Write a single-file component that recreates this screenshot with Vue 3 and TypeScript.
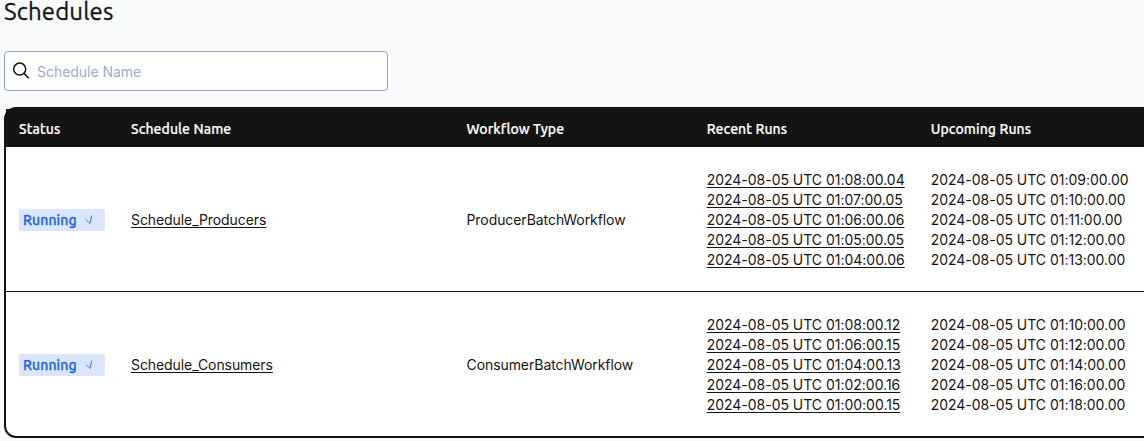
<script setup lang="ts">
interface Schedule {
  name: string
  type: string
  recent: string[]
  upcoming: string[]
}

const day = '2024-08-05 UTC'

const schedules: Schedule[] = [
  {
    name: 'Schedule_Producers',
    type: 'ProducerBatchWorkflow',
    recent: ['01:08:00.04', '01:07:00.05', '01:06:00.06', '01:05:00.05', '01:04:00.06'],
    upcoming: ['01:09:00.00', '01:10:00.00', '01:11:00.00', '01:12:00.00', '01:13:00.00'],
  },
  {
    name: 'Schedule_Consumers',
    type: 'ConsumerBatchWorkflow',
    recent: ['01:08:00.12', '01:06:00.15', '01:04:00.13', '01:02:00.16', '01:00:00.15'],
    upcoming: ['01:10:00.00', '01:12:00.00', '01:14:00.00', '01:16:00.00', '01:18:00.00'],
  },
]
</script>

<template>
  <main class="page">
    <h1 class="title">Schedules</h1>
    <label class="search">
      <svg class="search-icon" width="18" height="18" viewBox="0 0 18 18" fill="none" stroke="#141414" stroke-width="1.5">
        <circle cx="6.7" cy="7.1" r="6" />
        <path d="M11 11.4 15.8 16.2" />
      </svg>
      <input type="text" placeholder="Schedule Name" />
    </label>
    <section class="table">
      <header class="row head">
        <span>Status</span>
        <span>Schedule Name</span>
        <span>Workflow Type</span>
        <span>Recent Runs</span>
        <span>Upcoming Runs</span>
      </header>
      <div v-for="s in schedules" :key="s.name" class="row body">
        <div>
          <span class="badge">
            <span class="badge-text">Running</span>
            <svg width="8" height="10" viewBox="0 0 8 10" fill="none" stroke="#5f83e2" stroke-linecap="round">
              <path d="M1 4.8 4.6 8" stroke-width="1" />
              <path d="M4.9 8.2 6.7 1.2" stroke-width="1.3" />
            </svg>
          </span>
        </div>
        <div class="name"><a class="link">{{ s.name }}</a></div>
        <div class="name">{{ s.type }}</div>
        <div class="runs">
          <a v-for="r in s.recent" :key="r" class="link">{{ day }} {{ r }}</a>
        </div>
        <div class="runs">
          <span v-for="u in s.upcoming" :key="u">{{ day }} {{ u }}</span>
        </div>
      </div>
    </section>
  </main>
</template>

<style>
html,
body {
  margin: 0;
  background: #f8fafc;
  overflow: hidden;
}
</style>

<style scoped>
.page {
  box-sizing: border-box;
  height: 441px;
  padding-left: 4px;
  overflow: hidden;
  color: #141414;
  font: 14px/20px Inter, sans-serif;
}
.title {
  margin: 0;
  height: 51px;
  font: 400 24px/24px Ubuntu, 'Noto Sans', sans-serif;
  letter-spacing: 0.12px;
  -webkit-text-stroke: 0.3px currentColor;
}
.search {
  box-sizing: border-box;
  display: flex;
  align-items: center;
  width: 384px;
  height: 40px;
  padding: 0 8px;
  border: 1px solid #92a4c3;
  border-radius: 4px;
  background: #fff;
}
.search-icon {
  flex: none;
  margin-right: 6px;
}
input {
  flex: 1;
  min-width: 0;
  padding: 2px 0 0;
  border: 0;
  outline: 0;
  background: transparent;
  font: 14px/20px Inter, sans-serif;
  letter-spacing: -0.04px;
}
input::placeholder {
  color: #9aacd3;
  opacity: 1;
}
.table {
  box-sizing: border-box;
  width: 1160px;
  height: 331px;
  margin-top: 16px;
  border: 2px solid #141414;
  border-radius: 12px;
  background: #fff;
}
.row {
  display: grid;
  grid-template-columns: 112px 335.5px 240.2px 224px 1fr;
  padding-left: 13px;
  white-space: nowrap;
}
.head {
  box-sizing: border-box;
  height: 38px;
  padding-top: 2px;
  align-items: center;
  background: #141414;
  color: #fff;
  font: 500 14px/20px Ubuntu, 'Noto Sans', sans-serif;
  letter-spacing: 0.09px;
  -webkit-text-stroke: 0.2px currentColor;
}
.body {
  box-sizing: border-box;
  height: 144px;
  padding-top: 2px;
  align-items: center;
}
.body + .body {
  height: 145px;
  border-top: 1px solid #141414;
}
.name {
  letter-spacing: -0.08px;
}
.runs {
  display: flex;
  flex-direction: column;
  align-items: flex-start;
  letter-spacing: -0.02px;
}
.link {
  text-decoration: underline;
  text-decoration-thickness: 1px;
  text-underline-offset: 2px;
  text-decoration-skip-ink: none;
}
.badge {
  box-sizing: border-box;
  display: flex;
  align-items: center;
  width: 86px;
  height: 22px;
  padding-left: 4px;
  border-radius: 2px;
  background: #dbe6fe;
  color: #2364d8;
  font: 500 14px/20px Ubuntu, 'Noto Sans', sans-serif;
  letter-spacing: 0.12px;
  -webkit-text-stroke: 0.3px currentColor;
}
.badge-text {
  width: 62px;
}
</style>
